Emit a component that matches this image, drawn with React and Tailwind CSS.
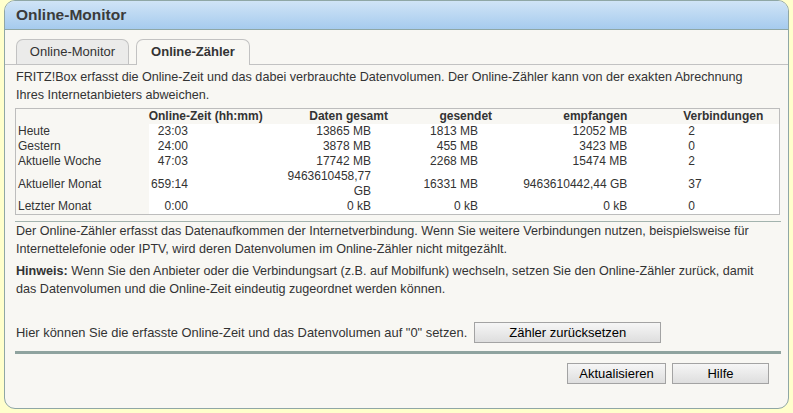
import React from 'react';

const rows = [
  { label: 'Heute', time: '23:03', total: '13865 MB', sent: '1813 MB', recv: '12052 MB', conn: '2' },
  { label: 'Gestern', time: '24:00', total: '3878 MB', sent: '455 MB', recv: '3423 MB', conn: '0' },
  { label: 'Aktuelle Woche', time: '47:03', total: '17742 MB', sent: '2268 MB', recv: '15474 MB', conn: '2' },
  { label: 'Aktueller Monat', time: '659:14', total: ['9463610458,77', 'GB'], sent: '16331 MB', recv: '9463610442,44 GB', conn: '37' },
  { label: 'Letzter Monat', time: '0:00', total: '0 kB', sent: '0 kB', recv: '0 kB', conn: '0' },
];

const Button = ({ children, className = '' }) => (
  <button
    type="button"
    className={`h-[21px] border border-[#a3a3a3] bg-linear-to-b from-[#f6f6f6] to-[#dedede] text-[13px] text-black leading-none ${className}`}
  >
    {children}
  </button>
);

export default function App() {
  return (
    <div className="w-[793px] h-[413px] bg-[#ffffcc] px-[4px] font-['Liberation_Sans',Arial,sans-serif] text-[12px] text-[#333]">
      <div className="h-[409px] rounded-[11px] border border-[#8fa7a5] bg-[#f8f7f3] overflow-hidden flex flex-col">
        {/* Title bar */}
        <div className="h-[29px] shrink-0 bg-linear-to-b from-[#d0e4f6] to-[#a6cbee] border-b border-[#8fa7a5] pl-[11px] flex items-center">
          <h1 className="text-[15.5px] font-bold text-[#3b3b3b] leading-none">Online-Monitor</h1>
        </div>

        {/* Tabs */}
        <div className="mt-[9px] flex gap-[7px] pl-[11px] border-b border-[#c2c2c2] h-[26px]">
          <div className="w-[113px] h-[25px] rounded-t-[7px] border border-b-0 border-[#c2c2c2] bg-[#ebebea] flex items-center justify-center text-[13px] text-[#333]">
            Online-Monitor
          </div>
          <div className="w-[114px] h-[26px] rounded-t-[7px] border border-b-0 border-[#c2c2c2] bg-[#f8f7f3] flex items-center justify-center pb-[1px] text-[13px] font-bold text-[#333]">
            Online-Zähler
          </div>
        </div>

        <div className="pl-[10px] pr-[7px] flex flex-col">
          <p className="mt-[3px] pl-[1px] text-[12.6px] leading-[18px]">
            FRITZ!Box erfasst die Online-Zeit und das dabei verbrauchte Datenvolumen. Der Online-Zähler kann von der exakten Abrechnung
            <br />
            Ihres Internetanbieters abweichen.
          </p>

          {/* Counter table */}
          <table className="mt-[4px] w-[765px] table-fixed border border-[#bdbdbd] border-collapse leading-[15px] whitespace-nowrap">
            <colgroup>
              <col className="w-[133px]" />
              <col className="w-[113px]" />
              <col className="w-[127px]" />
              <col className="w-[103px]" />
              <col className="w-[135px]" />
              <col className="w-[152px]" />
            </colgroup>
            <thead>
              <tr className="font-bold">
                <th className="p-0"></th>
                <th className="p-0 text-center font-bold">Online-Zeit (hh:mm)</th>
                <th className="p-0 pr-[1px] text-right font-bold">Daten gesamt</th>
                <th className="p-0 text-right font-bold">gesendet</th>
                <th className="p-0 text-right font-bold">empfangen</th>
                <th className="p-0 pl-[56px] text-left font-bold">Verbindungen</th>
              </tr>
            </thead>
            <tbody>
              {rows.map((r) => (
                <tr key={r.label}>
                  <td className="p-0 pl-[2px] align-middle">{r.label}</td>
                  <td className="p-0 pr-[74px] text-right bg-white align-middle">{r.time}</td>
                  <td className="p-0 pr-[18px] text-right bg-white align-middle">
                    {Array.isArray(r.total) ? (
                      <>
                        {r.total[0]}
                        <br />
                        {r.total[1]}
                      </>
                    ) : (
                      r.total
                    )}
                  </td>
                  <td className="p-0 pr-[14px] text-right bg-white align-middle">{r.sent}</td>
                  <td className="p-0 text-right bg-white align-middle">{r.recv}</td>
                  <td className="p-0 pl-[61px] text-left bg-white align-middle">{r.conn}</td>
                </tr>
              ))}
            </tbody>
          </table>

          <div className="mt-[6px] h-[1px] bg-[#a3b3ae]" />

          <p className="pl-[1px] text-[12.6px] leading-[18px]">
            Der Online-Zähler erfasst das Datenaufkommen der Internetverbindung. Wenn Sie weitere Verbindungen nutzen, beispielsweise für
            <br />
            Internettelefonie oder IPTV, wird deren Datenvolumen im Online-Zähler nicht mitgezählt.
          </p>
          <p className="mt-[4px] pl-[1px] text-[12.6px] leading-[18px]">
            <span className="font-bold">Hinweis:</span> Wenn Sie den Anbieter oder die Verbindungsart (z.B. auf Mobilfunk) wechseln, setzen Sie den Online-Zähler zurück, damit
            <br />
            das Datenvolumen und die Online-Zeit eindeutig zugeordnet werden können.
          </p>

          <div className="mt-[24px] pl-[1px] flex items-center">
            <span className="text-[12.9px]">Hier können Sie die erfasste Online-Zeit und das Datenvolumen auf "0" setzen.</span>
            <Button className="ml-[7px] w-[187px]">Zähler zurücksetzen</Button>
          </div>

          <div className="mt-[8px] h-[3px] bg-[#8fa39f]" />

          <div className="mt-[9px] flex justify-end gap-[6px] pr-[12px]">
            <Button className="w-[99px]">Aktualisieren</Button>
            <Button className="w-[97px]">Hilfe</Button>
          </div>
        </div>
      </div>
    </div>
  );
}
